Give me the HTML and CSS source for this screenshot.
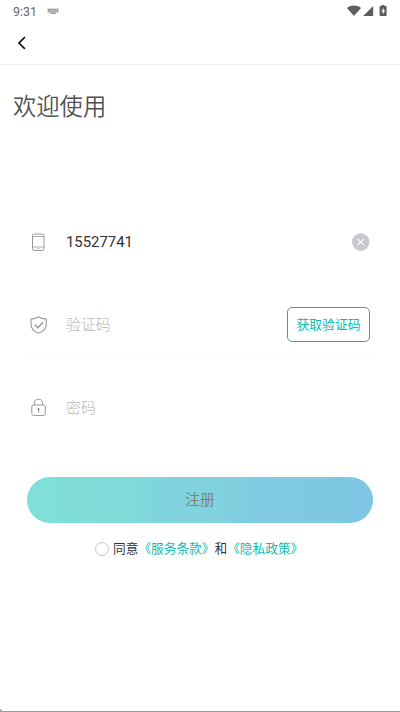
FILE: index.html
```html
<!DOCTYPE html>
<html lang="zh-CN">
<head>
<meta charset="utf-8">
<title>注册</title>
<link rel="stylesheet" href="styles.css">
</head>
<body>
<div class="screen">
  <div class="status">
    <span class="time">9:31</span>
    <svg class="keyboard" width="12" height="7" viewBox="0 0 12 7"><path d="M.5.5h11v4.300h-11z" fill="#bcbcbc"/><path d="M1 1.500h10M1 3.200h10" stroke="#888" stroke-width=".9" stroke-dasharray="1 .8"/><path d="M3 5.300h6" stroke="#999" stroke-width="1.200"/></svg>
    <svg class="signals" width="42" height="14" viewBox="0 0 42 14" fill="#5e5e5e"><path d="M1 3.900C5 .8 11 .8 15 3.900L8 12z"/><path d="M27.200 2v10H17.200z"/><path d="M35.500 1h3v1h1.300q.8 0 .8.8v8.500q0 .8-.8.8h-5.400q-.8 0-.8-.8V2.800q0-.8.8-.8h1.100z"/><path d="M37.700 3.700l-2.300 3.900h1.500v2.800l2.200-3.900h-1.400z" fill="#fff"/></svg>
  </div>
  <header class="navbar">
    <svg width="10" height="14" viewBox="0 0 10 14" fill="none" stroke="#111" stroke-width="1.700"><path d="M7.900 1.200L2 7l5.900 5.800"/></svg>
  </header>
  <h1 class="title">欢迎使用</h1>
  <main class="form">
    <div class="row phone">
      <svg class="icon" width="18" height="20" viewBox="0 0 18 20" fill="none" stroke="#999" stroke-width="1"><rect x="2.500" y="2" width="11.500" height="16.500" rx="1.800"/><path d="M2.500 4.500H14M2.500 15H14" stroke-width=".8"/><path d="M7.500 16.800h1.600"/></svg>
      <span class="value">15527741</span>
      <svg class="clear" width="18" height="18" viewBox="0 0 18 18"><circle cx="8.700" cy="9" r="8.700" fill="#c8c9cc"/><path d="M5.500 5.800l6.400 6.400M11.900 5.800l-6.400 6.400" stroke="#fff" stroke-width="1.200"/></svg>
    </div>
    <div class="row code">
      <svg class="icon" width="18" height="20" viewBox="0 0 18 20" fill="none" stroke="#999" stroke-width="1.100"><path d="M8.600 1.700C6.600 3.200 4 3.900 1 4.100v5.400c0 4.300 3.300 7 7.600 8.800 4.400-1.800 7.700-4.500 7.700-8.800V4.100c-3-.2-5.700-.9-7.700-2.400z" stroke-linejoin="round"/><path d="M4.700 9.700l3.200 3 5.200-5.500" stroke-width="1.400"/></svg>
      <span class="placeholder">验证码</span>
      <button class="get-code">获取验证码</button>
    </div>
    <div class="row password">
      <svg class="icon" width="18" height="20" viewBox="0 0 18 20" fill="none" stroke="#999" stroke-width="1"><rect x="1.800" y="8" width="13.500" height="10.500" rx="2"/><path d="M4.400 8V6.300a4.100 4.100 0 0 1 8.200 0V8"/><circle cx="8.500" cy="12" r="1.100" fill="#888" stroke="none"/><path d="M8.500 12v3.200" stroke="#888"/></svg>
      <span class="placeholder">密码</span>
    </div>
  </main>
  <button class="submit">注册</button>
  <div class="terms">
    <span class="radio"></span>
    <span>同意<a>《服务条款》</a>和<a>《隐私政策》</a></span>
  </div>
</div>
</body>
</html>
```
FILE: styles.css
```css
* { box-sizing: border-box; }

body {
  margin: 0;
  background: #9c9c9c;
  font-family: Roboto, "Noto Sans CJK SC", sans-serif;
  color: #323233;
}

.screen {
  display: flex;
  flex-direction: column;
  height: 711px;
  background: #fff;
  border-bottom-left-radius: 4px;
  overflow: hidden;
}

.status {
  display: flex;
  align-items: center;
  height: 22px;
  padding: 0 12px 0 13px;
}

.time {
  width: 34px;
  padding-top: 1px;
  font-size: 12.400px;
  line-height: 22px;
  color: #666;
}

.signals { margin-left: auto; }

.navbar {
  display: flex;
  align-items: center;
  height: 43px;
  padding-left: 17px;
  border-bottom: 1px solid #ebedf0;
}

.title {
  margin: 24px 0 0 13px;
  font-size: 23.300px;
  font-weight: 350;
  line-height: 36px;
  color: #505050;
}

.form {
  margin: 75px 30px 0;
}

.row {
  display: flex;
  align-items: center;
  height: 83px;
}

.icon { margin-right: 18px; }

.value {
  font-size: 14.900px;
}

.clear, .get-code { margin-left: auto; }

.placeholder {
  padding-bottom: 2px;
  font-size: 14.900px;
  font-weight: 300;
  color: #b8b8b8;
}

.code {
  height: 58px;
  margin-top: 13px;
  border-bottom: 1px solid #f5f5f6;
}

.password { height: 50px; margin-top: 28px; }

.get-code {
  width: 83px;
  height: 35px;
  padding: 0 0 2px;
  border: 1px solid #3494ff;
  border-radius: 5px;
  background: #fff;
  color: #0bbcb0;
  font: 400 12.800px "Noto Sans CJK SC", sans-serif;
}

.submit {
  height: 46px;
  margin: 45px 27px 0;
  padding: 0 0 4px;
  border: 0;
  border-radius: 24px;
  background: linear-gradient(90deg, #80dfd8 0%, #80dcd9 29%, #80d5de 36%, #80d1df 58%, #80cae2 66%, #7fc8e3 91%, #7dc5e4 100%);
  color: #808080;
  font: 400 14.800px "Noto Sans CJK SC", sans-serif;
}

.terms {
  display: flex;
  align-items: center;
  height: 20px;
  margin: 16px 0 0 95px;
  font-size: 12.700px;
  line-height: 20px;
  white-space: nowrap;
}

.terms a { color: #0bbcb0; }

.radio {
  width: 14px;
  height: 14px;
  margin-right: 4px;
  border: 1px solid #c8c9cc;
  border-radius: 50%;
}
```
